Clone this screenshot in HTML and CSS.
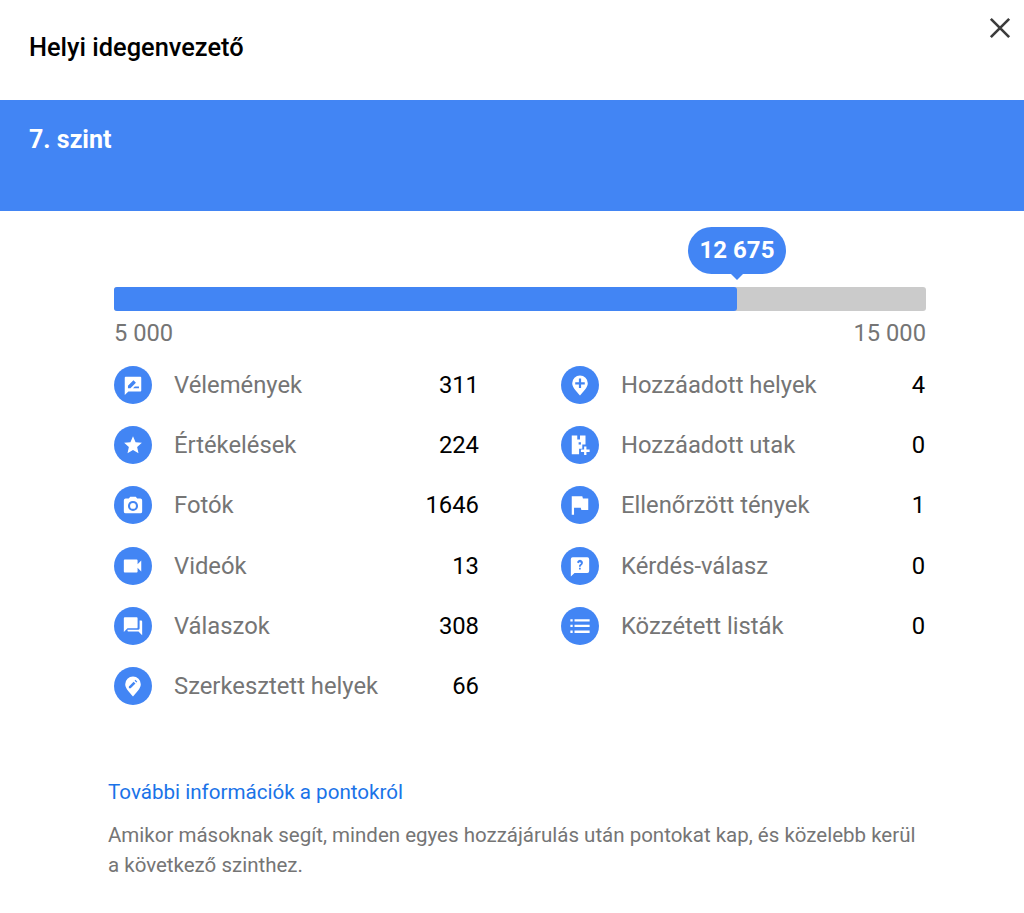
FILE: index.html
```html
<!DOCTYPE html>
<html lang="hu">
<head>
<meta charset="utf-8">
<title>Helyi idegenvezető</title>
<link rel="stylesheet" href="styles.css">
</head>
<body>
<div class="dialog">
  <header class="top">
    <h1 class="title">Helyi idegenvezető</h1>
    <svg class="close" viewBox="0 0 24 24"><path d="M2 2 L22 22 M22 2 L2 22"/></svg>
  </header>
  <section class="band"><div class="level">7. szint</div></section>
  <section class="progress">
    <div class="track">
      <div class="fill"></div>
      <div class="bubble">12 675</div>
    </div>
    <div class="ends"><span>5 000</span><span>15 000</span></div>
  </section>
  <section class="stats">
    <div class="stat"><span class="ic"><svg viewBox="0 0 24 24"><path d="M4 3h16a1 1 0 0 1 1 1v14a1 1 0 0 1-1 1H7l-4 4V4a1 1 0 0 1 1-1z"/><path class="cut" d="M6.500 15.500v-2.700l6-6 2.700 2.700-6 6zM12 15.500l2-2h4.500v2z"/></svg></span><span class="name">Vélemények</span><span class="num">311</span></div>
    <div class="stat"><span class="ic"><svg viewBox="0 0 24 24"><path d="M12 2.500l2.800 6.400 6.900.7-5.200 4.600 1.500 6.800-6-3.500-6 3.500 1.500-6.800-5.200-4.600 6.900-.7z"/></svg></span><span class="name">Értékelések</span><span class="num">224</span></div>
    <div class="stat"><span class="ic"><svg viewBox="0 0 24 24"><path fill-rule="evenodd" d="M9 3h6l1.600 2H20a2 2 0 0 1 2 2v12a2 2 0 0 1-2 2H4a2 2 0 0 1-2-2V7a2 2 0 0 1 2-2h3.400zM12 7.500a5.500 5.500 0 1 0 0 11 5.500 5.500 0 0 0 0-11zM12 9.800a3.200 3.200 0 1 1 0 6.400 3.200 3.200 0 0 1 0-6.400z"/></svg></span><span class="name">Fotók</span><span class="num">1646</span></div>
    <div class="stat"><span class="ic"><svg viewBox="0 0 24 24"><path d="M3 5h13a1 1 0 0 1 1 1v4l4-4v12l-4-4v4a1 1 0 0 1-1 1H3a1 1 0 0 1-1-1V6a1 1 0 0 1 1-1z"/></svg></span><span class="name">Videók</span><span class="num">13</span></div>
    <div class="stat"><span class="ic"><svg viewBox="0 0 24 24"><path d="M3 2.500h13a1 1 0 0 1 1 1v10a1 1 0 0 1-1 1H6l-4 4v-15a1 1 0 0 1 1-1z"/><path d="M19.200 6H21a1 1 0 0 1 1 1v15l-4-4H7a1 1 0 0 1-1-1v-1h12a1.200 1.200 0 0 0 1.200-1.200z"/></svg></span><span class="name">Válaszok</span><span class="num">308</span></div>
    <div class="stat"><span class="ic"><svg viewBox="0 0 24 24"><path d="M12 1.500a8.500 8.500 0 0 1 8.500 8.500c0 5-5.500 9.500-8.500 13.500-3-4-8.500-8.500-8.500-13.500a8.500 8.500 0 0 1 8.500-8.500z"/><path class="cut" d="M7.500 14.500v-2l5.200-5.200 2 2-5.200 5.200zM13.700 6.300l1-1 2 2-1 1z"/></svg></span><span class="name">Szerkesztett helyek</span><span class="num">66</span></div>
    <div class="stat"><span class="ic"><svg viewBox="0 0 24 24"><path d="M12 1.500a8.500 8.500 0 0 1 8.500 8.500c0 5-5.500 9.500-8.500 13.500-3-4-8.500-8.500-8.500-13.500a8.500 8.500 0 0 1 8.500-8.500z"/><path class="cut" d="M10.800 5h2.400v4h4v2.400h-4v4h-2.400v-4h-4V9h4z"/></svg></span><span class="name">Hozzáadott helyek</span><span class="num">4</span></div>
    <div class="stat"><span class="ic"><svg viewBox="0 0 24 24"><path d="M3 1.500h6v4.500h3V1.500h6v10h-3.500V16H11v6H3z"/><path class="cut" d="M10.500 9h2.500v2.500h-2.500z"/><path d="M16.500 13.500h2.500v3.500h3.500v2.500H19v3.500h-2.500v-3.500H13v-2.500h3.500z"/></svg></span><span class="name">Hozzáadott utak</span><span class="num">0</span></div>
    <div class="stat"><span class="ic"><svg viewBox="0 0 24 24"><path d="M3 2.500h11.500l.7 2.500H21v12.500h-7.500l-.7-2.500H5.500v7.500H3z"/></svg></span><span class="name">Ellenőrzött tények</span><span class="num">1</span></div>
    <div class="stat"><span class="ic"><svg viewBox="0 0 24 24"><path d="M4 2.500h16a2 2 0 0 1 2 2v13a2 2 0 0 1-2 2H6l-4 4v-19a2 2 0 0 1 2-2z"/><path class="cut" d="M8.800 8.300a3.200 3.200 0 1 1 5 2.800c-.8.500-1 .9-1 1.700h-1.900c0-1.500.5-2.200 1.500-2.900.6-.4.800-.8.600-1.300a1.200 1.200 0 0 0-2.300.3zM10.900 14h1.900v1.900h-1.900z"/></svg></span><span class="name">Kérdés-válasz</span><span class="num">0</span></div>
    <div class="stat"><span class="ic"><svg viewBox="0 0 24 24"><path d="M1.500 4.500h2.500V7H1.500zM6 4.500h16.500V7H6zM1.500 10.700h2.500v2.500H1.500zM6 10.700h16.500v2.500H6zM1.500 17h2.500v2.500H1.500zM6 17h16.500v2.500H6z"/></svg></span><span class="name">Közzétett listák</span><span class="num">0</span></div>
  </section>
  <footer class="foot">
    <a class="more" href="#">További információk a pontokról</a>
    <p class="desc">Amikor másoknak segít, minden egyes hozzájárulás után pontokat kap, és közelebb kerül a következő szinthez.</p>
  </footer>
</div>
</body>
</html>
```
FILE: styles.css
```css
* { box-sizing: border-box; }
html, body { margin: 0; padding: 0; background: #fff; }
body { font-family: Roboto, "Liberation Sans", sans-serif; }
.dialog { width: 1024px; height: 913px; overflow: hidden; }
.top { height: 100px; display: flex; justify-content: space-between; padding: 15px 13px 0 29px; }
.title { margin: 18px 0 0; font-size: 25.4px; line-height: 28px; font-weight: 500; color: #000; }
.close { width: 22px; height: 22px; margin-top: 2px; }
.close path { stroke: #3c3c3c; stroke-width: 2.900; fill: none; }
.band { height: 111px; background: #4285f4; padding: 25px 29px 0; }
.level { color: #fff; font-size: 25px; line-height: 30px; font-weight: 700; }
.progress { padding: 76px 98px 0 114px; }
.track { position: relative; height: 24px; background: #cbcbcb; border-radius: 3px; }
.fill { width: 623px; height: 24px; background: #4285f4; border-radius: 3px; }
.bubble { position: absolute; left: 574px; top: -60px; width: 98px; height: 47px; border-radius: 24px; background: #4285f4; color: #fff; font-size: 24px; font-weight: 700; line-height: 47px; text-align: center; }
.bubble::after { content: ""; position: absolute; left: 42px; top: 46px; border: 7px solid transparent; border-top-color: #4285f4; border-bottom: 0; }
.ends { display: flex; justify-content: space-between; margin-top: 8px; font-size: 23.7px; line-height: 28px; color: #757575; }
.stats { display: grid; grid-template-columns: 365px 364px; grid-template-rows: repeat(6, 60.2px); grid-auto-flow: column; column-gap: 82px; margin: 8px 0 0 114px; }
.stat { display: flex; align-items: center; font-size: 23.8px; }
.ic { width: 38px; height: 38px; border-radius: 50%; background: #4285f4; display: flex; align-items: center; justify-content: center; flex: none; }
.ic svg { width: 22px; height: 22px; fill: #fff; }
.ic .cut { fill: #4285f4; }
.name { margin-left: 22px; color: #757575; flex: 1; }
.num { color: #000; }
.foot { margin-top: 62px; padding: 0 100px 0 108px; }
.more { display: block; font-size: 20.6px; line-height: 28px; color: #1a73e8; text-decoration: none; }
.desc { margin: 14px 0 0; font-size: 20.5px; line-height: 30px; color: #757575; }
```
